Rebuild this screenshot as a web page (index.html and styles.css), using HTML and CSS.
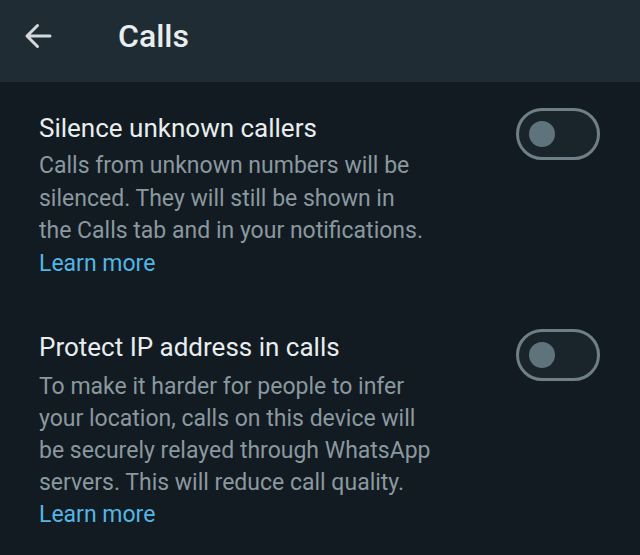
FILE: index.html
```
<!DOCTYPE html>
<html lang="en">

<head>
    <meta charset="UTF-8">
    <meta name="viewport" content="width=device-width, initial-scale=1.0">
    <title>Calls</title>
    <link rel="stylesheet" href="styles.css">
</head>

<body>

    <!-- Top bar -->
    <header class="app-bar">
        <svg class="back-icon" width="28" height="26" viewBox="0 0 28 26">
            <path d="M26 13H3 M13.5 2.5L3 13l10.5 10.5" />
        </svg>
        <h1 class="app-title">Calls</h1>
    </header>

    <main class="settings">
        <div class="setting-row">
            <div class="setting-text">
                <div class="setting-title">Silence unknown callers</div>
                <p class="setting-desc first">
                    Calls from unknown numbers will be<br>
                    silenced. They will still be shown in<br>
                    the Calls tab and in your notifications.<br>
                    <a class="learn-more" href="#">Learn more</a>
                </p>
            </div>
            <div class="toggle"><span class="toggle-thumb"></span></div>
        </div>

        <div class="setting-row">
            <div class="setting-text">
                <div class="setting-title">Protect IP address in calls</div>
                <p class="setting-desc">
                    To make it harder for people to infer<br>
                    your location, calls on this device will<br>
                    be securely relayed through WhatsApp<br>
                    servers. This will reduce call quality.<br>
                    <a class="learn-more" href="#">Learn more</a>
                </p>
            </div>
            <div class="toggle second"><span class="toggle-thumb"></span></div>
        </div>
    </main>

</body>

</html>
```

FILE: styles.css
```
/* Theme colours */
:root {
    --bar-bg: #1f2c33;
    --page-bg: #121b21;
    --title-color: #e9edef;
    --desc-color: #8a989f;
    --link-color: #53b6e4;
    --toggle-border: #6f7f87;
    --toggle-fill: #1a252b;
    --toggle-thumb: #5f737d;
}

html {
    background: var(--page-bg);
}

body {
    margin: 0;
    font-family: Roboto, "Noto Sans", sans-serif;
    background: var(--page-bg);
    color: var(--title-color);
}

.app-bar {
    height: 82px;
    background: var(--bar-bg);
    display: flex;
    align-items: center;
    padding-left: 24px;
}

.back-icon {
    fill: none;
    stroke: #d2d8db;
    stroke-width: 3;
    stroke-linecap: round;
    stroke-linejoin: round;
    margin-top: -10px;
}

.app-title {
    margin: -10px 0 0 66px;
    font-size: 32px;
    font-weight: 500;
    color: var(--title-color);
}

.settings {
    padding: 30px 40px 0 39px;
}

.setting-row {
    display: flex;
    justify-content: space-between;
    align-items: flex-start;
    margin-bottom: 51px;
}

.setting-row:last-child {
    margin-bottom: 0;
}

.setting-title {
    font-size: 26px;
    line-height: 32px;
}

.setting-desc {
    margin: 8px 0 0;
    font-size: 23px;
    line-height: 32px;
    color: var(--desc-color);
}

.setting-desc.first {
    margin-top: 6px;
    line-height: 32.5px;
}

.learn-more {
    color: var(--link-color);
    text-decoration: none;
}

.toggle {
    width: 68px;
    height: 46px;
    margin-top: -4px;
    padding-left: 10px;
    border: 3px solid var(--toggle-border);
    border-radius: 26px;
    background: var(--toggle-fill);
    display: flex;
    align-items: center;
}

.toggle.second {
    margin-top: -2px;
}

.toggle-thumb {
    width: 26px;
    height: 26px;
    border-radius: 50%;
    background: var(--toggle-thumb);
}
```
